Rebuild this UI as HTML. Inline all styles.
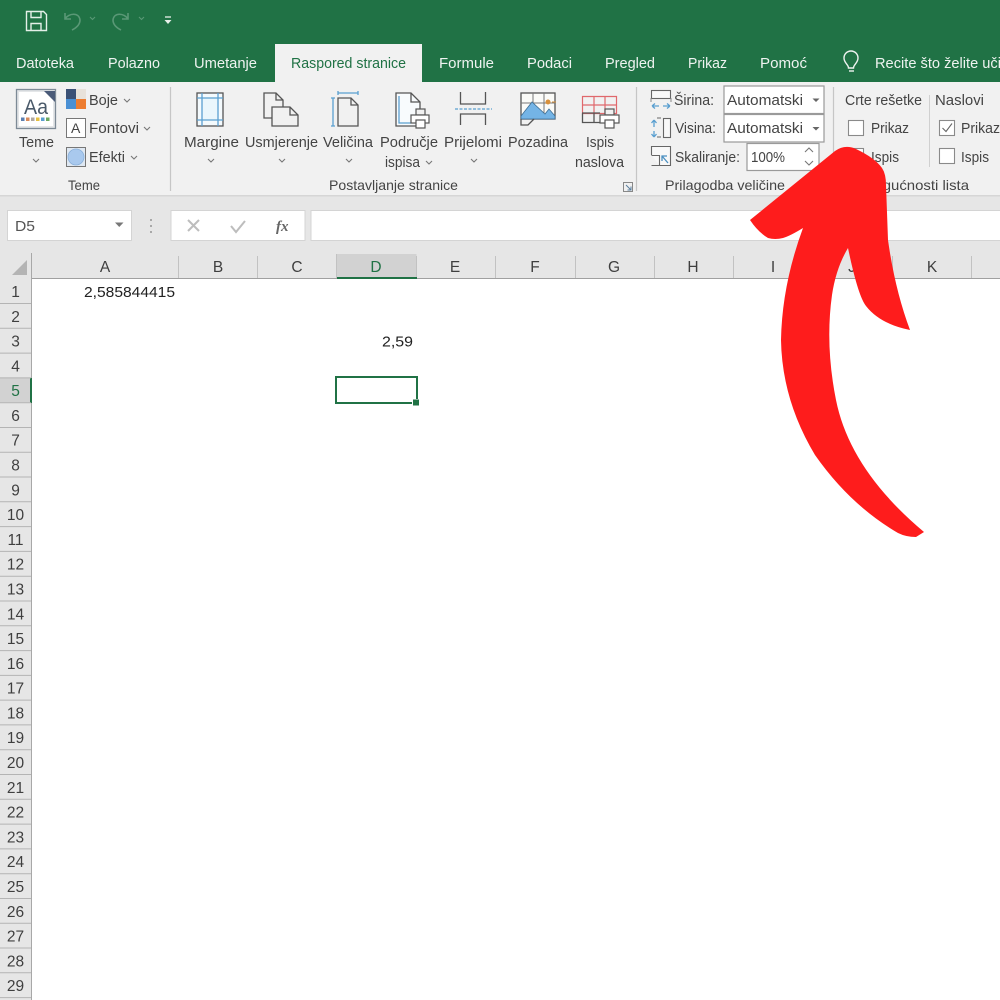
<!DOCTYPE html>
<html><head><meta charset="utf-8"><title>Excel</title>
<style>
html,body{margin:0;padding:0;background:#fff;width:1000px;height:1000px;overflow:hidden}
svg{display:block}
text{font-family:"Liberation Sans",sans-serif;font-size:15px;fill:#444}
.tab{fill:#eef3f0}
.h{fill:#3f3f3f;text-anchor:middle;font-size:15.500px}
.k{fill:#222}
.ic{fill:none;stroke:#555;stroke-width:1.3}
.bl{fill:none;stroke:#5a9fd0;stroke-width:1.3}
.ch{fill:none;stroke:#777;stroke-width:1.1}
</style></head><body>
<svg width="1000" height="1000" viewBox="0 0 1000 1000" xmlns="http://www.w3.org/2000/svg">
<rect width="1000" height="1000" fill="#fff"/>
<!-- title & tabs -->
<rect width="1000" height="82" fill="#207245"/>
<rect x="275" y="44" width="147" height="38" fill="#f1f1f1"/>
<!-- QAT -->
<g fill="none" stroke="#e4efe8" stroke-width="1.4">
<path d="M26.5 11.5h17l3 3v16h-20z"/><path d="M31 11.5v6h10v-6"/><path d="M31 30.5v-7h10v7"/>
</g>
<g fill="none" stroke="#5a9876" stroke-width="1.6">
<path d="M65 13v6h6M65 19c4-6 14-7 15 1 0 5-4 8-8 10"/>
<path d="M128 13v6h-6M128 19c-4-6-14-7-15 1 0 5 4 8 8 10"/>
<path d="M90 17l2.500 2.500 2.500-2.500M139 17l2.500 2.500 2.500-2.500" stroke-width="1.100"/>
</g>
<path d="M165 17h6" stroke="#e8f0ea" stroke-width="1.300"/><path d="M164.500 20h7l-3.500 4z" fill="#e8f0ea"/>
<text class="tab" x="16" y="68" textLength="58" lengthAdjust="spacingAndGlyphs">Datoteka</text>
<text class="tab" x="108" y="68" textLength="52" lengthAdjust="spacingAndGlyphs">Polazno</text>
<text class="tab" x="194" y="68" textLength="63" lengthAdjust="spacingAndGlyphs">Umetanje</text>
<text x="291" y="68" textLength="115" lengthAdjust="spacingAndGlyphs" style="fill:#207245">Raspored stranice</text>
<text class="tab" x="439" y="68" textLength="55" lengthAdjust="spacingAndGlyphs">Formule</text>
<text class="tab" x="527" y="68" textLength="45" lengthAdjust="spacingAndGlyphs">Podaci</text>
<text class="tab" x="605" y="68" textLength="50" lengthAdjust="spacingAndGlyphs">Pregled</text>
<text class="tab" x="688" y="68" textLength="39" lengthAdjust="spacingAndGlyphs">Prikaz</text>
<text class="tab" x="760" y="68" textLength="47" lengthAdjust="spacingAndGlyphs">Pomoć</text>
<text class="tab" x="875" y="68" textLength="126" lengthAdjust="spacingAndGlyphs">Recite što želite uči</text>
<g fill="none" stroke="#eef3f0" stroke-width="1.400"><path d="M848.500 68c0-3.500-4.500-5-4.500-10a7 7 0 0 1 14 0c0 5-4.500 6.500-4.500 10z"/><path d="M849 71h5"/></g>
<!-- ribbon -->
<rect y="82" width="1000" height="113" fill="#f1f1f1"/>
<rect y="195" width="1000" height="58" fill="#e6e6e6"/>
<rect y="195" width="1000" height="1.500" fill="#d6d6d6"/>
<path d="M170.500 87v104M636.500 87v104M833.500 87v104" stroke="#c6c6c6" stroke-width="1.200"/>
<path d="M929.500 95v72" stroke="#d0d0d0"/>
<!-- Teme -->
<rect x="16.500" y="89.500" width="39" height="39" fill="#e4e6e8" stroke="#7d8a96" stroke-width="1.300"/>
<rect x="19" y="92" width="34" height="34" fill="#fff"/>
<path d="M44 91h11v11z" fill="#4a5a78"/>
<text x="24" y="114" textLength="24" lengthAdjust="spacingAndGlyphs" style="font-size:21px;fill:#4a5a6a">Aa</text>
<g><rect x="21" y="117.500" width="3.500" height="3.500" fill="#5d7fb0"/><rect x="26" y="117.500" width="3.500" height="3.500" fill="#d88a5a"/><rect x="31" y="117.500" width="3.500" height="3.500" fill="#b0a8a0"/><rect x="36" y="117.500" width="3.500" height="3.500" fill="#e6c040"/><rect x="41" y="117.500" width="3.500" height="3.500" fill="#5a9fd0"/><rect x="46" y="117.500" width="3.500" height="3.500" fill="#6aa860"/></g>
<text x="19" y="147" textLength="35" lengthAdjust="spacingAndGlyphs">Teme</text>
<path class="ch" d="M33 159l3 3 3-3M208 159l3 3 3-3M279 159l3 3 3-3M346 159l3 3 3-3M471 159l3 3 3-3"/>
<rect x="66" y="89" width="10" height="10" fill="#3b5176"/><rect x="76" y="89" width="10" height="10" fill="#e8e2da"/><rect x="66" y="99" width="10" height="10" fill="#4a90d4"/><rect x="76" y="99" width="10" height="10" fill="#ed7d31"/>
<text x="89" y="105" textLength="29" lengthAdjust="spacingAndGlyphs">Boje</text>
<rect x="66.500" y="118.500" width="19" height="19" fill="#fff" stroke="#777"/>
<text x="71" y="133" style="font-size:14px">A</text>
<text x="89" y="133" textLength="50" lengthAdjust="spacingAndGlyphs">Fontovi</text>
<rect x="66.500" y="147.500" width="19" height="19" fill="#dfe8f2" stroke="#777"/>
<circle cx="76" cy="157" r="8" fill="#a9c9ee" stroke="#8ab0da" stroke-width=".8"/>
<text x="89" y="162" textLength="36" lengthAdjust="spacingAndGlyphs">Efekti</text>
<path class="ch" d="M124 99l3 3 3-3M144 127l3 3 3-3M131 156l3 3 3-3"/>
<text x="68" y="190" textLength="32" lengthAdjust="spacingAndGlyphs" style="font-size:14px">Teme</text>
<!-- Margine -->
<rect x="197" y="93" width="26" height="33" fill="#f4fafd" stroke="#555" stroke-width="1.300"/>
<rect x="202" y="98" width="16" height="22" fill="#eaf6fc"/>
<path class="bl" d="M202 93v33M218 93v33M197 98h26M197 120h26"/>
<!-- Usmjerenje -->
<path class="ic" d="M272 118h-8V93h12l7 7v7"/><path class="ic" d="M276 93v7h7"/>
<path class="ic" d="M272 107h18l8 8v11h-26z"/><path class="ic" d="M290 107v8h8"/>
<!-- Veličina -->
<path class="ic" d="M338 98h13l7 7v21h-20z"/><path class="ic" d="M351 98v7h7"/>
<path class="bl" d="M338 93h20M338 91v4M358 91v4M333 98v28M331 98h4M331 126h4"/>
<!-- Područje -->
<path d="M396 93h15l9 9v24h-24z" fill="#f8fbfd" stroke="#555" stroke-width="1.300"/>
<path class="bl" d="M399 96v27h12"/><path class="ic" d="M411 93v9h9"/>
<g><rect x="416" y="109" width="9" height="6" fill="#f1f1f1" stroke="#555" stroke-width="1.200"/><rect x="411" y="115" width="18" height="8" fill="#fff" stroke="#555" stroke-width="1.200"/><rect x="416" y="120" width="9" height="8" fill="#fff" stroke="#555" stroke-width="1.200"/></g>
<!-- Prijelomi -->
<path class="ic" d="M460.500 92v12h25V92M460.500 125v-11h25v11"/>
<path d="M455 109h37" stroke="#5a9fd0" stroke-width="1.300" stroke-dasharray="3 1.500"/>
<!-- Pozadina -->
<rect x="521" y="93" width="34" height="26" fill="#fbfbf8" stroke="#555" stroke-width="1.300"/>
<path d="M533 93v10M544 93v26M521 103h34" stroke="#777"/>
<path d="M521 116l11-14 13 12 4-5 6 7v3h-34z" fill="#74b4e6" stroke="#3f6f95" stroke-width=".8"/>
<circle cx="548" cy="102" r="2.500" fill="#d8903a"/><path d="M552 102h4" stroke="#d8903a"/>
<path class="ic" d="M521 119v6h7l6-6"/>
<!-- Ispis naslova -->
<path d="M582.500 96.500h34v17h-34zM594 96v17M605 96v17M582 105h34" fill="none" stroke="#e0686c" stroke-width="1.200"/>
<path class="ic" d="M582.500 113.500v9h17M594 113v9M582 113h18"/>
<g><rect x="605" y="109" width="9" height="6" fill="#f1f1f1" stroke="#555" stroke-width="1.200"/><rect x="600" y="115" width="19" height="8" fill="#fff" stroke="#555" stroke-width="1.200"/><rect x="605" y="120" width="9" height="8" fill="#fff" stroke="#555" stroke-width="1.200"/></g>
<text x="184" y="147" textLength="55" lengthAdjust="spacingAndGlyphs">Margine</text>
<text x="245" y="147" textLength="73" lengthAdjust="spacingAndGlyphs">Usmjerenje</text>
<text x="323" y="147" textLength="50" lengthAdjust="spacingAndGlyphs">Veličina</text>
<text x="380" y="147" textLength="58" lengthAdjust="spacingAndGlyphs">Područje</text>
<text x="385" y="167" textLength="35" lengthAdjust="spacingAndGlyphs">ispisa</text>
<path class="ch" d="M426 161l3 3 3-3"/>
<text x="444" y="147" textLength="58" lengthAdjust="spacingAndGlyphs">Prijelomi</text>
<text x="508" y="147" textLength="60" lengthAdjust="spacingAndGlyphs">Pozadina</text>
<text x="586" y="147" textLength="28" lengthAdjust="spacingAndGlyphs">Ispis</text>
<text x="575" y="167" textLength="49" lengthAdjust="spacingAndGlyphs">naslova</text>
<text x="329" y="190" textLength="129" lengthAdjust="spacingAndGlyphs" style="font-size:14px">Postavljanje stranice</text>
<path d="M623.500 182.500h9v9h-9z" fill="none" stroke="#888"/><path d="M626 185l5 5M631 186.500v3.500h-3.500" fill="none" stroke="#5a7f9f"/>
<!-- Prilagodba -->
<rect x="651.500" y="90.500" width="19" height="8" fill="#f8f8f8" stroke="#666" stroke-width="1.100"/>
<path d="M651 98v4M671 98v4" stroke="#888"/>
<path d="M652 106h7M663 106h7M652 106l3-2.500M652 106l3 2.500M670 106l-3-2.500M670 106l-3 2.500" class="bl"/>
<path d="M654 120v7M654 131v6M654 120l-2.500 3M654 120l2.500 3M654 137l-2.500-3M654 137l2.500-3" class="bl"/>
<path d="M657 118h4M657 137h4" stroke="#666" fill="none"/>
<rect x="663.500" y="118.500" width="7" height="19" fill="#f8f8f8" stroke="#666" stroke-width="1.100"/>
<path d="M651.500 155v-8.500h19v19h-11" fill="#f8f8f8" stroke="#666" stroke-width="1.100"/>
<path d="M651.500 155.500h8v10h-8" fill="none" stroke="#666" stroke-width="1.100"/>
<path d="M668 163l-6-7M662 161v-5h5" fill="none" stroke="#4a8fc0" stroke-width="1.300"/>
<text x="674" y="105" textLength="40" lengthAdjust="spacingAndGlyphs">Širina:</text>
<text x="675" y="133" textLength="41" lengthAdjust="spacingAndGlyphs">Visina:</text>
<text x="675" y="162" textLength="65" lengthAdjust="spacingAndGlyphs">Skaliranje:</text>
<rect x="724" y="86" width="100" height="27.500" fill="#fff" stroke="#9a9a9a" stroke-width="1.200"/>
<rect x="724" y="114.500" width="100" height="27.500" fill="#fff" stroke="#9a9a9a" stroke-width="1.200"/>
<rect x="747" y="143.500" width="72" height="27" fill="#fff" stroke="#9a9a9a" stroke-width="1.200"/>
<text x="727" y="105" textLength="76" lengthAdjust="spacingAndGlyphs">Automatski</text>
<text x="727" y="133" textLength="76" lengthAdjust="spacingAndGlyphs">Automatski</text>
<text x="751" y="162" textLength="34" lengthAdjust="spacingAndGlyphs">100%</text>
<path d="M812.500 98.500h7l-3.500 3.500zM812.500 127h7l-3.500 3.500z" fill="#666"/>
<path class="ch" d="M805 152l4-4 4 4M805 161l4 4 4-4"/>
<text x="665" y="190" textLength="120" lengthAdjust="spacingAndGlyphs" style="font-size:14px">Prilagodba veličine</text>
<!-- Mogućnosti lista -->
<text x="845" y="105" textLength="77" lengthAdjust="spacingAndGlyphs">Crte rešetke</text>
<text x="935" y="105" textLength="49" lengthAdjust="spacingAndGlyphs">Naslovi</text>
<rect x="848.500" y="120.500" width="15" height="15" fill="#fff" stroke="#8a8a8a" stroke-width="1.100"/>
<rect x="848.500" y="148.500" width="15" height="15" fill="#fff" stroke="#8a8a8a" stroke-width="1.100"/>
<rect x="939.500" y="120.500" width="15" height="15" fill="#fff" stroke="#8a8a8a" stroke-width="1.100"/>
<path d="M942.500 128l3.500 3.500 6-8" fill="none" stroke="#666" stroke-width="1.100"/>
<rect x="939.500" y="148.500" width="15" height="15" fill="#fff" stroke="#8a8a8a" stroke-width="1.100"/>
<text x="871" y="133" textLength="38" lengthAdjust="spacingAndGlyphs">Prikaz</text>
<text x="871" y="162" textLength="28" lengthAdjust="spacingAndGlyphs">Ispis</text>
<text x="961" y="133" textLength="39" lengthAdjust="spacingAndGlyphs">Prikaz</text>
<text x="961" y="162" textLength="28" lengthAdjust="spacingAndGlyphs">Ispis</text>
<text x="862" y="190" textLength="107" lengthAdjust="spacingAndGlyphs" style="font-size:14px">Mogućnosti lista</text>
<!-- formula bar -->
<rect x="7.500" y="210.500" width="124" height="30" fill="#fff" stroke="#d4d4d4"/>
<text x="15" y="231" textLength="20" lengthAdjust="spacingAndGlyphs" style="fill:#555">D5</text>
<path d="M115 222.500h8.500l-4.250 4.500z" fill="#777"/>
<path d="M151 219v2M151 225v2M151 231v2" stroke="#a8a8a8" stroke-width="2"/>
<rect x="171" y="210.500" width="134" height="30" fill="#fff" stroke="#d4d4d4"/>
<rect x="311" y="210.500" width="690" height="30" fill="#fff" stroke="#d4d4d4"/>
<path d="M188 220l11 11M199 220l-11 11M231 226l5 6 9-11" fill="none" stroke="#bdbdbd" stroke-width="2"/>
<text x="276" y="231" style="font-family:'Liberation Serif',serif;font-style:italic;font-weight:bold;font-size:15px;fill:#666">fx</text>
<!-- column headers -->
<rect y="253" width="1000" height="26" fill="#e6e6e6"/>
<rect x="337" y="254" width="79.500" height="24" fill="#d2d2d2"/>
<path d="M0 278.500h1000" stroke="#a0a0a0"/>
<path d="M178.500 256v22M257.500 256v22M416.500 256v22M495.500 256v22M575.500 256v22M654.500 256v22M733.500 256v22M813.500 256v22M892.500 256v22M971.500 256v22" stroke="#c2c2c2"/>
<path d="M336.500 254v24" stroke="#c2c2c2"/>
<rect x="337" y="277" width="80" height="2" fill="#207245"/>
<text class="h" x="105" y="272">A</text><text class="h" x="218" y="272">B</text><text class="h" x="297" y="272">C</text><text class="h" x="376" y="272" style="fill:#207245">D</text><text class="h" x="455" y="272">E</text><text class="h" x="535" y="272">F</text><text class="h" x="614" y="272">G</text><text class="h" x="693" y="272">H</text><text class="h" x="773" y="272">I</text><text class="h" x="852" y="272">J</text><text class="h" x="932" y="272">K</text>
<!-- row headers -->
<rect y="253" width="31.500" height="747" fill="#e6e6e6"/>
<path d="M12 275l15-15v15z" fill="#b4b4b4"/>
<path d="M31.500 253v747" stroke="#a8a8a8"/>
<rect y="378" width="31" height="24.500" fill="#d2d2d2"/>
<rect x="30" y="378" width="2" height="25" fill="#207245"/>
<path d="M0 303.500h31M0 328.300h31M0 353.100h31M0 377.900h31M0 402.700h31M0 427.500h31M0 452.200h31M0 477h31M0 501.800h31M0 526.600h31M0 551.400h31M0 576.200h31M0 601h31M0 625.800h31M0 650.600h31M0 675.400h31M0 700.100h31M0 724.900h31M0 749.700h31M0 774.500h31M0 799.300h31M0 824.100h31M0 848.900h31M0 873.700h31M0 898.500h31M0 923.300h31M0 948h31M0 972.800h31M0 997.600h31" stroke="#b4b4b4" fill="none"/>
<text class="h" x="15.500" y="297">1</text><text class="h" x="15.500" y="321.800">2</text><text class="h" x="15.500" y="346.600">3</text><text class="h" x="15.500" y="371.400">4</text><text class="h" x="15.500" y="396.200" style="fill:#207245">5</text><text class="h" x="15.500" y="421">6</text><text class="h" x="15.500" y="445.700">7</text><text class="h" x="15.500" y="470.500">8</text><text class="h" x="15.500" y="495.300">9</text><text class="h" x="15.500" y="520.100">10</text><text class="h" x="15.500" y="544.900">11</text><text class="h" x="15.500" y="569.700">12</text><text class="h" x="15.500" y="594.500">13</text><text class="h" x="15.500" y="619.300">14</text><text class="h" x="15.500" y="644.100">15</text><text class="h" x="15.500" y="668.900">16</text><text class="h" x="15.500" y="693.600">17</text><text class="h" x="15.500" y="718.400">18</text><text class="h" x="15.500" y="743.200">19</text><text class="h" x="15.500" y="768">20</text><text class="h" x="15.500" y="792.800">21</text><text class="h" x="15.500" y="817.600">22</text><text class="h" x="15.500" y="842.400">23</text><text class="h" x="15.500" y="867.200">24</text><text class="h" x="15.500" y="892">25</text><text class="h" x="15.500" y="916.800">26</text><text class="h" x="15.500" y="941.500">27</text><text class="h" x="15.500" y="966.300">28</text><text class="h" x="15.500" y="991.100">29</text>
<!-- cells -->
<text class="k" x="84" y="297" textLength="91" lengthAdjust="spacingAndGlyphs">2,585844415</text>
<text class="k" x="382" y="346.600" textLength="31" lengthAdjust="spacingAndGlyphs">2,59</text>
<rect x="336" y="377" width="81" height="26" fill="none" stroke="#207245" stroke-width="2"/>
<rect x="412" y="399" width="7" height="7" fill="#fff"/>
<rect x="413" y="399.500" width="6" height="6" fill="#207245"/>
<!-- arrow -->
<path d="M750 220 L835 151 Q845 144 856 149 Q875 158 882 168 Q886 174 886 185 L888 240 Q895 290 910 330 Q880 324 866 306 Q858 296 848 248 Q836 268 832 295 Q825 345 836 400 Q850 470 924 532 L916 537 Q906 537 898 533 Q850 505 815 455 Q782 400 781 340 Q782 285 803 228 Q790 236 783 238 Q775 240 768 238 Q758 232 750 220 Z" fill="#fe1c1c"/>
</svg>
</body></html>
